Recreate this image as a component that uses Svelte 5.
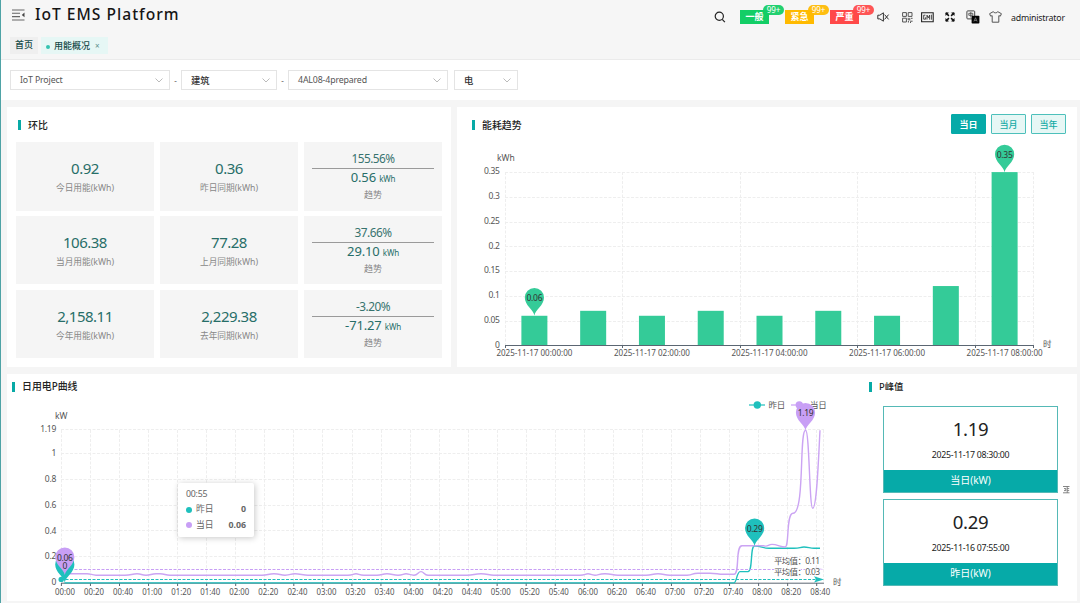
<script>
  const selects = [
    { text: 'IoT Project', w: 160, sep: '-' },
    { text: '建筑', w: 96, sep: '-', dark: true },
    { text: '4AL08-4prepared', w: 160, sep: '' },
    { text: '电', w: 64, sep: '', dark: true }
  ];
  const alarms = [
    { text: '一般', color: '#13ce66' },
    { text: '紧急', color: '#ffba00' },
    { text: '严重', color: '#ff4949' }
  ];
  const rows = [
    { a: '0.92', al: '今日用能(kWh)', b: '0.36', bl: '昨日同期(kWh)', pct: '155.56%', diff: '0.56' },
    { a: '106.38', al: '当月用能(kWh)', b: '77.28', bl: '上月同期(kWh)', pct: '37.66%', diff: '29.10' },
    { a: '2,158.11', al: '今年用能(kWh)', b: '2,229.38', bl: '去年同期(kWh)', pct: '-3.20%', diff: '-71.27' }
  ];
  const peaks = [
    { v: '1.19', t: '2025-11-17 08:30:00', l: '当日(kW)' },
    { v: '0.29', t: '2025-11-16 07:55:00', l: '昨日(kW)' }
  ];

  const bars = [0.06, 0.07, 0.06, 0.07, 0.06, 0.07, 0.06, 0.12, 0.35];
  const band = 529 / 9;
  const barY = (v) => 238.5 - (v / 0.35) * 173.4;
  const barTicks = [0, 0.05, 0.1, 0.15, 0.2, 0.25, 0.3, 0.35];
  const barHours = [0, 2, 4, 6, 8];

  const lineTicks = [0, 0.2, 0.4, 0.6, 0.8, 1, 1.19];
  const lineY = (v) => 208.8 - v * 128.6;
  const times = Array.from({ length: 27 }, (_, i) => {
    const m = i * 20;
    return String(Math.floor(m / 60)).padStart(2, '0') + ':' + String(m % 60).padStart(2, '0');
  });
  const step = 29.05;
</script>

{#snippet pin(x, y, color, label)}
  <path d="M{x} {y}C{x - 1} {y - 6} {x - 9.6} {y - 10} {x - 9.6} {y - 18}a9.6 9.6 0 0 1 19.2 0C{x + 9.6} {y - 10} {x + 1} {y - 6} {x} {y}Z" fill={color} />
  {#if label}<text x={x} y={y - 14.4} text-anchor="middle" class="pin-label">{label}</text>{/if}
{/snippet}

<div class="page">
  <header>
    <div class="top">
      <svg class="fold" width="14" height="12" viewBox="0 0 14 12"><path d="M0 1h12.5M0 4.3h8M0 7.6h8M0 11h12.5" stroke="#666" stroke-width="1.1" /><path d="M12.5 3.6v4.6L9.8 5.9z" fill="#444" /></svg>
      <h1>IoT EMS Platform</h1>
      <div class="tools">
        <svg class="search" width="12" height="12" viewBox="0 0 12 12" fill="none" stroke="#222" stroke-width="1.2"><circle cx="5.3" cy="5.3" r="4.1" /><path d="M8.2 8.3l2.7 2.9" /></svg>
        {#each alarms as a}
          <div class="alarm" style="--c:{a.color}">{a.text}<span class="badge">99+</span></div>
        {/each}
        <svg class="mute" width="13" height="10" viewBox="0 0 13 10" fill="none" stroke="#333" stroke-width="1"><path d="M.8 3.2h2L6.4.8v8.4L2.8 6.9h-2zM7.6 2.6l4 4.8M11.6 2.6l-4 4.8" /></svg>
        <svg class="qr" width="11" height="11" viewBox="0 0 11 11" fill="none" stroke="#555" stroke-width="1"><path d="M.6.6h3.8v3.8H.6zM6.2.6H10v3.8H6.2zM.6 6.2h3.8V10H.6zM6.2 5.9v2h1.6v-2M9 6.3h1.6M6.4 9v1.5M8 9.2h2.6M8 10.5h1" /></svg>
        <svg class="om" width="13" height="11" viewBox="0 0 13 11" fill="none" stroke="#222"><path d="M.6.7h11.6v9H.6z" stroke-width="1.1" /><path d="M4.4 3.2H2.7v4h1.9V5.3M6 7.6V3.2l1.3 2.6 1.3-2.6v4.4M10.4 2.7v5" stroke-width=".8" /></svg>
        <svg class="full" width="10" height="10" viewBox="0 0 10 10" fill="#111" stroke="#111"><path d="M.8 3.4V.8h2.6zM6.6.8h2.6v2.6zM.8 6.6v2.6h2.6zM9.2 6.6v2.6H6.6z" stroke-width=".6" /><path d="M1 1l2.9 2.9M9 1L6.1 3.9M1 9l2.9-2.9M9 9L6.1 6.1" stroke-width="1.5" /></svg>
        <svg class="lang" width="14" height="14" viewBox="0 0 14 14"><rect x=".9" y=".9" width="7.8" height="8" rx=".8" fill="#f6f6f6" stroke="#444" /><path d="M2.8 3.3h4v2h-4zM4.8 2v5.5" fill="none" stroke="#444" stroke-width=".8" /><rect x="5.6" y="5.7" width="7.8" height="7.8" rx=".8" fill="#050505" /><path d="M7.9 11.5l1.6-3.8 1.6 3.8M8.5 10.4h2" fill="none" stroke="#aaa" stroke-width=".6" /></svg>
        <svg class="shirt" width="13" height="12" viewBox="0 0 13 12" fill="none" stroke="#555" stroke-width="1" stroke-linejoin="round"><path d="M4.2.7C5 2.2 8 2.2 8.8.7L12.4 2.7 11.4 5.1 9.8 4.7V11.2H3.2V4.7L1.6 5.1.6 2.7z" /></svg>
        <span class="user">administrator</span>
      </div>
    </div>
    <nav>
      <span class="tab">首页</span>
      <span class="tab active"><i></i>用能概况<b>×</b></span>
    </nav>
  </header>

  <section class="filters">
    {#each selects as s, i}
      <div class="select" class:dark={s.dark} style="width:{s.w}px">
        <span>{s.text}</span>
        <svg width="8" height="5" viewBox="0 0 8 5" fill="none" stroke="#bbb" stroke-width="1"><path d="M.5.5L4 4 7.5.5" /></svg>
      </div>
      <span class="sep" class:narrow={i === 2}>{s.sep}</span>
    {/each}
  </section>

  <main>
    <div class="row upper">
      <section class="card compare">
        <h2>环比</h2>
        <div class="grid">
          {#each rows as r}
            <div class="cell"><strong>{r.a}</strong><small>{r.al}</small></div>
            <div class="cell"><strong>{r.b}</strong><small>{r.bl}</small></div>
            <div class="cell trend">
              <div class="pct">{r.pct}</div>
              <div class="diff">{r.diff} <em>kWh</em></div>
              <small>趋势</small>
            </div>
          {/each}
        </div>
      </section>

      <section class="card energy">
        <div class="head">
          <h2>能耗趋势</h2>
          <div class="buttons"><button class="on">当日</button><button>当月</button><button>当年</button></div>
        </div>
        <svg class="chart" width="620" height="260" viewBox="0 0 620 260">
          <g class="gridlines">
            {#each barTicks.slice(1) as t}<path d="M48 {Math.round(barY(t)) + 0.5}H577" />{/each}
            {#each [48.5, 165.5, 283.5, 400.5, 518.5, 576.5] as x}<path d="M{x} 65V238" />{/each}
          </g>
          <text x="40" y="53.5" class="unit">kWh</text>
          {#each barTicks as t}<text x="42.7" y={barY(t) + 2.2} text-anchor="end">{t}</text>{/each}
          {#each bars as v, i}
            <rect x={48 + band * (i + 0.5) - 13} y={barY(v)} width="26" height={238.5 - barY(v)} fill="#34cb98" />
          {/each}
          <path class="axis" d="M48 238.5H577M48.5 238v3M165.5 238v3M283.5 238v3M400.5 238v3M518.5 238v3M576.5 238v3" />
          {#each barHours as h}
            <text x={48 + band * (h + 0.5)} y="249.2" text-anchor="middle" textLength="76" lengthAdjust="spacingAndGlyphs" class="even">2025-11-17 0{h}:00:00</text>
          {/each}
          <text x="586" y="240">时</text>
          {@render pin(77.4, 208.5, '#34cb98', '0.06')}
          {@render pin(547.6, 65.3, '#34cb98', '0.35')}
        </svg>
      </section>
    </div>

    <section class="card lower">
      <div class="curve">
        <h2>日用电P曲线</h2>
        <svg class="chart" width="850" height="227" viewBox="0 0 850 227">
          <g class="gridlines">
            {#each lineTicks.slice(1) as t}<path d="M54 {Math.round(lineY(t)) - 0.5}H817" />{/each}
            {#each times as _, i}<path d="M{Math.round(54 + i * step) + 0.5} 56V209" />{/each}
            <path d="M816.5 56V209" />
          </g>
          <text x="48" y="44.6" class="unit">kW</text>
          {#each lineTicks as t}<text x="49" y={lineY(t) + 2.2} text-anchor="end">{t}</text>{/each}
          <path class="axis" d="M54 209.2H817" />
          {#each times as t, i}
            <path class="axis" d="M{54.4 + i * step} 209v3" />
            <text x={58 + i * step} y="220.6" text-anchor="middle" textLength="20" lengthAdjust="spacingAndGlyphs" class="even">{t}</text>
          {/each}
          <text x="826" y="211">时</text>
          <g class="legend">
            <path d="M742 31h16" stroke="#1fc0bd" stroke-width="1.2" /><circle cx="750.3" cy="31" r="3.7" fill="#1fc0bd" />
            <text x="761.5" y="33.6">昨日</text>
            <path d="M784 31h16" stroke="#c89ff5" stroke-width="1.2" /><circle cx="792.3" cy="31" r="3.7" fill="#c89ff5" />
            <text x="803" y="33.6">当日</text>
          </g>
          <path d="M57.5 208.9H727C729.5 208.9 730 197.6 733 197.6H741C746 197.6 743 172 747.5 172C753 171.5 756 174.3 762 174.3H787C793 174.3 793 173 797 173S803 174.3 807 174.3H813" class="line" stroke="#1fc0bd" />
          <path d="M57.5 199.7H80C84 199.7 85 201.2 89 201.2H118C124 201.2 125 199.8 130 199.8S134 201.2 139 201.2S144 199.8 149 199.8H153C158 199.8 158 201.2 163 201.2H255C261 201.2 261 199.8 267 199.8S273 201.2 278 201.2C284 201.2 283 199.8 288 199.8S296 201.2 301 201.2H341C346 201.2 346 199.8 349 199.8S352 201.2 357 201.2H370C375 201.2 375 199.8 380 199.8S386 201.2 391 201.2S396 199.8 399 199.8S403 201.2 407 201.2C411 201.2 411 197.6 414 197.6S417 201.2 421 201.2H460C467 201.2 467 199.8 474 199.8S481 201.2 487 201.2H573C578 201.2 578 199.8 581 199.8S584 201.2 588 201.2S591 199.8 598 199.8S605 201.2 611 201.2H639C645 201.2 645 199.8 651 199.8S657 201.2 663 201.2H680C687 201.2 684 199.2 691 199.2H703C709 199.2 711 200.3 716 200.3H727C733 200.3 728 171.8 735 171.8H757C761 173.2 761 170.4 765 170.4C770 170.4 774 173 778 173C782.5 173 779 139.3 786 139.3C798 139.3 792 56.3 798.6 56.3C802.5 56.3 802.3 134.3 805.7 134.3C809.8 134.3 811.5 84 813 56.3" class="line" stroke="#cba4f3" />
          <path d="M54 195.5H813" class="avg" stroke="#c89ff5" />
          <path d="M54 205.5H810" class="avg" stroke="#1fc0bd" />
          <circle cx="54.2" cy="205.4" r="2.7" fill="#1fc0bd" />
          <path d="M807 202.2l10 3.2-10 3.2 2-3.2z" fill="#1fc0bd" />
          <path d="M808 192.8l9 2.6-6 .5z" fill="#c89ff5" opacity=".6" />
          <text x="767" y="190.3" textLength="46" class="halo">平均值：0.11</text>
          <text x="767" y="200.5" textLength="46" class="halo">平均值：0.03</text>
          {@render pin(57.8, 208.6, '#1fc0bd', '')}
          {@render pin(57.8, 201, '#c89ff5', '0.06')}
          <text x="57.8" y="194.6" text-anchor="middle" class="pin-label">0</text>
          {@render pin(747.6, 172, '#1fc0bd', '0.29')}
          {@render pin(798.5, 56.5, '#c89ff5', '1.19')}
        </svg>
        <div class="tooltip">
          <div class="time">00:55</div>
          <div class="item"><i style="background:#1fc0bd"></i>昨日<b>0</b></div>
          <div class="item"><i style="background:#c89ff5"></i>当日<b>0.06</b></div>
        </div>
      </div>
      <aside>
        <h2>P峰值</h2>
        <div class="peaks">
          {#each peaks as p}
            <div class="peak"><strong>{p.v}</strong><span>{p.t}</span><div class="foot">{p.l}</div></div>
          {/each}
        </div>
        <svg class="handle" width="9" height="9" viewBox="0 0 9 9" fill="none" stroke="#777" stroke-width=".9"><path d="M1 1.5h6.5M1 7.8h6.5M2 3.6h1.8M2 5.6h1.8M3.8 3.4v2.4M5.2 1.5v6.3M5.2 3.6h2M5.2 5.6h2" /></svg>
      </aside>
    </section>
  </main>
</div>

<style>
  :global(body) { margin: 0; background: #f6f6f6; overflow: hidden; }
  .page {
    box-sizing: border-box; width: 1080px; height: 603px; overflow: hidden;
    border-left: 1px solid #4fa3a6; background: #f5f5f5;
    font-family: 'Noto Sans', 'Noto Sans CJK SC', sans-serif; color: #333; font-size: 8px;
    display: flex; flex-direction: column;
  }
  header { height: 59px; border-bottom: 1px solid #ebebeb; background: #f6f6f6; flex: none; }
  .top { height: 34px; display: flex; align-items: center; padding-left: 11px; box-sizing: border-box; }
  .fold { margin-top: -4px; }
  h1 { margin: -7px 0 0 9px; font-size: 15.6px; line-height: 20px; font-weight: 500; letter-spacing: 1px; color: #151515; white-space: nowrap; }
  .tools { margin-left: auto; display: flex; align-items: center; padding-right: 15px; }
  .search { margin-right: 14px; }
  .alarm { position: relative; width: 29px; height: 14px; margin-right: 16px; background: var(--c); color: #fff; font-size: 9px; font-weight: 700; line-height: 14px; text-align: center; }
  .badge { position: absolute; left: 23px; top: -5px; width: 21px; height: 10px; border-radius: 5px; background: var(--c); font-weight: 400; font-size: 8px; line-height: 10px; letter-spacing: -.1px; opacity: .93; }
  .mute { margin-left: 2px; margin-right: 12px; }
  .qr { margin-right: 8px; }
  .om { margin-right: 11px; }
  .full { margin-right: 11px; }
  .lang { margin-right: 9px; }
  .shirt { margin-right: 9px; }
  .user { font-size: 8.8px; color: #222; width: 54px; line-height: 12px; letter-spacing: -.2px; margin-top: 1px; }
  nav { display: flex; gap: 3px; padding: 3px 0 0 9px; }
  .tab { box-sizing: border-box; height: 17px; line-height: 16px; padding: 0 5px; background: #efefef; font-size: 9px; color: #174b4a; font-weight: 500; width: 28px; }
  .tab.active { background: #e6f7f5; width: 67px; display: flex; align-items: center; white-space: nowrap; padding-left: 5px; }
  .tab i { width: 4px; height: 4px; border-radius: 50%; background: #35c3b0; margin: 2px 4px 0 0; }
  .tab b { font-weight: 400; font-size: 8px; margin-left: 5px; color: #5c8f8b; }

  .filters { height: 40px; box-sizing: border-box; background: #fff; display: flex; align-items: center; padding-left: 9px; flex: none; }
  .select { box-sizing: border-box; height: 20px; border: 1px solid #e4e4e4; display: flex; align-items: center; justify-content: space-between; padding: 0 6px 0 9px; font-size: 8.8px; letter-spacing: -.15px; color: #555; }
  .select span { margin-top: -1px; }
  .select.dark { color: #333; font-weight: 500; font-size: 9.3px; }
  .sep { width: 11px; text-align: center; color: #666; }
  .sep.narrow { width: 6px; }

  main { padding: 7px 3px 2px 6px; display: flex; flex-direction: column; gap: 7px; }
  .row { display: flex; gap: 6px; }
  .card { background: #fff; overflow: hidden; }
  h2 { margin: 0; display: flex; align-items: center; gap: 7px; font-size: 9.9px; font-weight: 500; line-height: 14px; color: #222; }
  h2::before { content: ''; width: 3px; height: 10px; background: #08aaa6; }

  .compare { width: 444px; height: 260px; box-sizing: border-box; padding: 11px 9px 0 9px; }
  .compare h2 { padding-left: 2px; }
  .grid { margin-top: 10px; display: grid; grid-template-columns: repeat(3, 138px); grid-template-rows: repeat(3, 68.5px); gap: 5.3px 6px; }
  .cell { background: #f5f5f5; display: flex; flex-direction: column; align-items: center; box-sizing: border-box; padding-top: 16px; }
  .cell strong { font-size: 15px; line-height: 20px; font-weight: 400; color: #276e68; letter-spacing: -.5px; }
  small { font-size: 8.7px; line-height: 12px; color: #888; margin-top: 4px; }
  .trend { padding: 8px 8px 0; }
  .pct { align-self: stretch; text-align: center; font-size: 11.8px; line-height: 17px; height: 18px; border-bottom: 1px solid #9a9a9a; color: #37736e; letter-spacing: -.5px; }
  .diff { font-size: 13px; line-height: 17px; color: #276e68; white-space: nowrap; letter-spacing: -.15px; }
  .diff em { font-size: 8px; font-style: normal; letter-spacing: -.2px; }
  .trend small { margin-top: 2px; font-size: 9px; }

  .energy { width: 620px; height: 260px; position: relative; }
  .head { display: flex; justify-content: space-between; padding: 7px 12px 0 15px; }
  .head h2 { height: 22px; }
  .buttons { display: flex; gap: 5px; position: relative; left: 0; margin-right: -1px; }
  button { box-sizing: border-box; width: 35px; height: 20px; padding: 0; border: 1px solid #4dc0bb; border-radius: 1px; background: #e6f7f5; color: #13aaa5; font: 500 9px 'Noto Sans CJK SC', sans-serif; }
  button.on { background: #06aaa8; border-color: #06aaa8; color: #fff; font-weight: 700; }
  .chart { position: absolute; left: 0; top: 0; pointer-events: none; }
  .chart text { font-size: 8.5px; fill: #555; letter-spacing: -.28px; }
  .chart .even { letter-spacing: 0; }
  .chart .unit { letter-spacing: 0; font-size: 8.5px; }
  .chart .pin-label { fill: #333; font-size: 8.5px; }
  .chart .halo { stroke: #fff; stroke-width: 1.5px; paint-order: stroke; letter-spacing: 0; }
  .gridlines path { stroke: #eee; stroke-dasharray: 3 1.5; fill: none; }
  .axis { stroke: #5b6672; fill: none; }
  .line { fill: none; stroke-width: 1.4; }
  .avg { fill: none; stroke-dasharray: 3 1.5; }

  .lower { width: 1070px; height: 227px; display: flex; }
  .curve { width: 850px; position: relative; padding-top: 5px; }
  .curve h2 { padding-left: 5px; }
  .tooltip { position: absolute; left: 171px; top: 109px; width: 76px; height: 54px; box-sizing: border-box; padding: 4px 8px 0 8px; background: #fff; border-radius: 2px; box-shadow: 1px 1px 6px rgba(0,0,0,.22); font-size: 8.8px; color: #666; }
  .time { line-height: 15px; letter-spacing: -.25px; }
  .item { display: flex; align-items: center; line-height: 15px; height: 15.5px; }
  .item i { width: 6px; height: 6px; border-radius: 50%; margin-right: 4px; }
  .item b { margin-left: auto; }
  aside { flex: 1; display: grid; grid-template-columns: 189px 1fr; grid-template-rows: 19px 1fr; padding: 5px 0 0 12px; column-gap: 10px; }
  aside h2 { grid-column: 1 / 3; align-self: start; font-size: 9.4px; }
  .lower h2 { line-height: 15px; }
  .peaks { padding: 8px 0 0 14px; display: flex; flex-direction: column; gap: 6px; width: 175px; }
  .peak { height: 87px; box-sizing: border-box; border: 1px solid #55b9b6; display: flex; flex-direction: column; align-items: center; }
  .peak strong { font-weight: 400; font-size: 18.6px; letter-spacing: -.3px; line-height: 24px; margin-top: 10px; color: #222; }
  .peak span { font-size: 8.8px; line-height: 12px; margin-top: 8px; color: #222; letter-spacing: -.3px; }
  .foot { align-self: stretch; margin-top: auto; height: 22px; line-height: 21px; text-align: center; background: #06aaa8; color: #fff; font-size: 10px; }
  .handle { margin-top: 87px; margin-left: -6px; }
</style>
